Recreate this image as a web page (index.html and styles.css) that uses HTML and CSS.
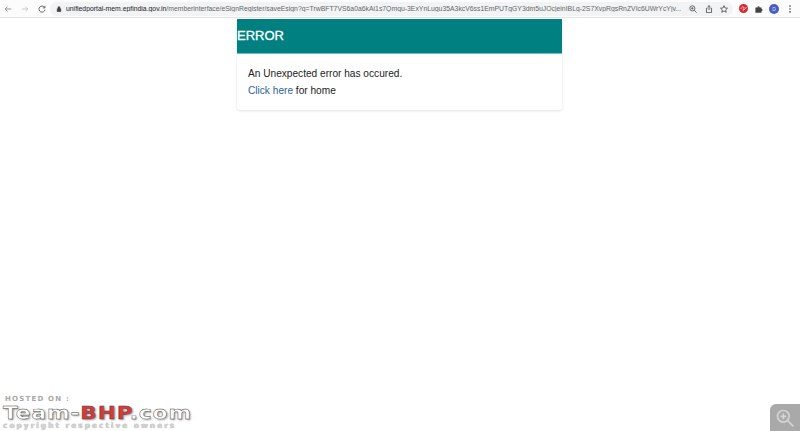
FILE: index.html
```html
<!DOCTYPE html>
<html lang="en">
  <head>
    <meta charset="UTF-8" />
    <meta name="viewport" content="width=device-width, initial-scale=1.0" />
    <title>Error</title>
    <link rel="stylesheet" href="styles.css">
  </head>
  <body>
    <!-- browser toolbar -->
    <div class="toolbar">
      <div class="nav">
        <svg class="ico" viewBox="0 0 10 10"><path d="M9 5H1.500M4.500 2 1.500 5l3 3" class="line faint" /></svg>
        <svg class="ico" viewBox="0 0 10 10"><path d="M1 5h7.500M5.500 2l3 3-3 3" class="line fainter" /></svg>
        <svg class="ico" viewBox="0 0 10 10"><path d="M8.300 3.200A3.800 3.800 0 1 0 8.800 5.600M8.600 1v2.600H6" class="line" /></svg>
      </div>
      <div class="address">
        <svg class="lock" viewBox="0 0 8 8"><path d="M1.500 3.500h5v4h-5zM2.600 3.500V2.200a1.400 1.400 0 0 1 2.800 0v1.300" /></svg>
        <span class="url"><span class="host">unifiedportal-mem.epfindia.gov.in</span>/memberinterface/eSignRegister/saveEsign?q=TrwBFT7VS6a0a6kAi1s7Qmqu-3ExYnLugu35A3kcV6ss1EmPUTgGY3dm5uJOcjeinIBLg-2S7XvpRgsRnZVIc6UWrYcYjv...</span>
        <div class="addr-icons">
          <svg class="ico" viewBox="0 0 10 10"><circle cx="4.200" cy="4.200" r="3.200" class="line" /><path d="M6.600 6.600 9.500 9.500M2.800 4.200h2.800M4.200 2.800v2.800" class="line" /></svg>
          <svg class="ico" viewBox="0 0 10 10"><path d="M3.200 4H1.800v5.500h6.400V4H6.800M5 6.500V.8M3.300 2.400 5 .8l1.700 1.600" class="line" /></svg>
          <svg class="ico" viewBox="0 0 10 10"><path d="m5 .8 1.300 2.900 3.100.3-2.300 2.100.7 3L5 7.500 2.200 9.100l.7-3L.6 4l3.100-.3z" class="line" /></svg>
        </div>
      </div>
      <div class="exts">
        <svg class="ext-red" viewBox="0 0 10 10"><circle cx="5" cy="5" r="5" class="red" /><path d="M2 5.500c1.500-3 3.500-3 3.500-1S3.500 7 4.500 7 8 5 8 3.500" class="squiggle" /></svg>
        <svg class="ico" viewBox="0 0 10 10"><path d="M.5 3h2.700a1.300 1.300 0 0 1 2.600 0h2.400v2a1.300 1.300 0 0 1 0 2.600v2.200H.5z" class="solid" /></svg>
        <span class="avatar">D</span>
        <svg class="ico" viewBox="0 0 10 10"><circle cx="5" cy="1.400" r="1" class="solid" /><circle cx="5" cy="5" r="1" class="solid" /><circle cx="5" cy="8.600" r="1" class="solid" /></svg>
      </div>
    </div>

    <div class="card">
      <div class="card-head">ERROR</div>
      <div class="card-body">
        <p class="msg">An Unexpected error has occured.</p>
        <p class="msg"><a href="#" class="link">Click here</a> for home</p>
      </div>
    </div>

    <!-- watermark over the picture -->
    <div class="mark">
      <div class="mark-top">HOSTED ON :</div>
      <div class="mark-logo">Team-<span class="mark-red">BHP</span>.com</div>
      <div class="mark-bottom">copyright respective owners</div>
    </div>
    <div class="zoom">
      <svg class="zoom-ico" viewBox="0 0 24 24"><circle cx="10" cy="10" r="7" /><path d="M15 15l7 7M6.500 10h7M10 6.500v7" /></svg>
    </div>
  </body>
</html>
```

FILE: styles.css
```css
html,
body {
  margin: 0;
  height: 431px;
  overflow: hidden;
}

body {
  position: relative;
  background: #fff;
  font-family: "Liberation Sans", Arial, sans-serif;
  color: #222;
}

.toolbar {
  display: flex;
  align-items: center;
  height: 17px;
  border-bottom: 1px solid #e4e4e6;
  background: #fcfcfc;
}

.nav {
  display: flex;
  align-items: center;
  gap: 9px;
  width: 50px;
  padding-left: 4px;
  box-sizing: border-box;
}

.ico {
  width: 8px;
  height: 8px;
  flex: none;
}

.line {
  fill: none;
  stroke: #555;
  stroke-width: 1.1;
}

.faint {
  stroke: #8b8b8b;
}

.fainter {
  stroke: #c4c4c4;
}

.solid {
  fill: #444;
}

.address {
  display: flex;
  align-items: center;
  width: 683px;
  height: 14px;
  border-radius: 7px;
  background: #f1f3f4;
  padding-left: 6px;
  box-sizing: border-box;
}

.lock {
  width: 6px;
  height: 6px;
  flex: none;
  margin: 0 4px 0 0;
  fill: #444;
  stroke: #444;
  stroke-width: 0.6;
}

.url {
  font-size: 6.85px;
  color: #666;
  white-space: nowrap;
  width: 619px;
  overflow: hidden;
}

.host {
  color: #222;
}

.addr-icons {
  display: flex;
  gap: 7.500px;
  margin-left: 4px;
}

.exts {
  display: flex;
  align-items: center;
  gap: 6.500px;
  padding-left: 6px;
}

.ext-red {
  width: 9px;
  height: 9px;
  flex: none;
}

.red {
  fill: #d9282f;
}

.squiggle {
  fill: none;
  stroke: #f6d5d5;
  stroke-width: 1;
}

.avatar {
  width: 10px;
  height: 10px;
  border-radius: 50%;
  background: #4a5cc0;
  color: #dfe3ff;
  font-size: 5px;
  line-height: 10px;
  text-align: center;
}

.card {
  width: 325px;
  margin: 1px 0 0 237px;
  border-radius: 0 0 3px 3px;
  box-shadow: 0 1px 3px rgba(0, 0, 0, 0.12);
}

.card-head {
  height: 35px;
  background: #008080;
  border-bottom: 1px solid #6fc0bd;
  box-sizing: border-box;
  color: #fff;
  font-size: 13px;
  line-height: 34px;
  -webkit-text-stroke: 0.3px #fff;
}

.card-body {
  padding: 14px 11px 0;
  height: 56px;
  box-sizing: border-box;
}

.msg {
  margin: 0 0 5px;
  font-size: 10.150px;
  line-height: 12px;
}

.link {
  color: #2a6496;
  text-decoration: none;
}

.mark {
  position: absolute;
  left: 3px;
  bottom: 1px;
  font-family: "DejaVu Sans", sans-serif;
  font-weight: bold;
  white-space: nowrap;
}

.mark-top {
  margin: 0 0 1px 2px;
  font-size: 7px;
  letter-spacing: 1.200px;
  color: #a8a8a8;
  line-height: 10px;
}

.mark-logo {
  font-size: 18px;
  line-height: 16px;
  letter-spacing: 0.800px;
  color: #fff;
  -webkit-text-stroke: 0.4px #444;
  text-shadow: 1px 1px 2px #999;
  transform: scaleX(1.2);
  transform-origin: left center;
}

.mark-red {
  color: #d83a3a;
}

.mark-bottom {
  font-size: 7.500px;
  letter-spacing: 1.950px;
  color: #d4d4d4;
  line-height: 9px;
  text-shadow: 0 0 1px #999;
}

.zoom {
  position: absolute;
  right: 0;
  bottom: 0;
  width: 30px;
  height: 27px;
  border-top-left-radius: 6px;
  background: #a9a9a9;
  display: flex;
  align-items: center;
  justify-content: center;
}

.zoom-ico {
  width: 20px;
  height: 20px;
  fill: none;
  stroke: #d4d4d4;
  stroke-width: 2;
}
```
